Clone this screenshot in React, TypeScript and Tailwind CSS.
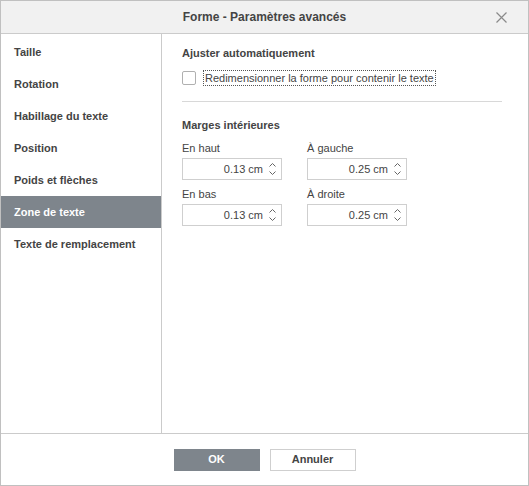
const font = { fontFamily: '"Liberation Sans", Arial, sans-serif' };

const menu = [
  'Taille',
  'Rotation',
  'Habillage du texte',
  'Position',
  'Poids et flèches',
  'Zone de texte',
  'Texte de remplacement',
];

export default function App() {
  return (
    <div style={font} className="w-[529px] h-[486px] bg-white border border-[#c0c0c0] flex flex-col text-[#444] text-[11px]">
      {/* Header */}
      <div className="h-[33px] shrink-0 bg-[#f1f1f1] border-b border-[#cbcbcb] flex items-center justify-center relative">
        <span className="text-[12px] font-bold text-[#444]">Forme - Paramètres avancés</span>
        <svg className="absolute right-[21px] top-[11px]" width="11" height="11" viewBox="0 0 11 11" fill="none" stroke="#8a8a8a" strokeWidth="1.2">
          <path d="M0.5 0.5 L10.5 10.5 M10.5 0.5 L0.5 10.5" />
        </svg>
      </div>

      {/* Body */}
      <div className="flex h-[400px] shrink-0 border-b border-[#cbcbcb]">
        <div className="w-[161px] shrink-0 border-r border-[#cbcbcb] pt-[2px]">
          {menu.map((m) => (
            <div
              key={m}
              className={`h-[32px] flex items-center pl-[13px] font-bold leading-[16px] ${
                m === 'Zone de texte' ? 'bg-[#7e858c] text-white' : 'text-[#444]'
              }`}
            >
              {m}
            </div>
          ))}
        </div>

        <div className="flex-1 pl-[20px] pt-[11px]">
          <div className="font-bold leading-[16px]">Ajuster automatiquement</div>
          <div className="flex items-center mt-[9px] h-[16px]">
            <div className="w-[14px] h-[14px] border border-[#b0b0b0] rounded-[2px] bg-white" />
            <span className="ml-[7px] border border-dotted border-[#555] px-[1px] leading-[14px] h-[16px]">
              Redimensionner la forme pour contenir le texte
            </span>
          </div>
          <div className="w-[320px] h-px bg-[#d8d8d8] mt-[15px]" />

          <div className="font-bold leading-[16px] mt-[15px]">Marges intérieures</div>
          <div className="grid grid-cols-[100px_100px] gap-x-[25px] mt-[7px]">
            <Field label="En haut" value="0.13 cm" />
            <Field label="À gauche" value="0.25 cm" />
            <div className="mt-[6px] col-span-2 grid grid-cols-[100px_100px] gap-x-[25px]">
              <Field label="En bas" value="0.13 cm" />
              <Field label="À droite" value="0.25 cm" />
            </div>
          </div>
        </div>
      </div>

      {/* Footer */}
      <div className="flex-1 flex items-center justify-center gap-[10px]">
        <button className="w-[86px] h-[22px] bg-[#7e858c] text-white font-bold text-[11px]">OK</button>
        <button className="w-[86px] h-[22px] bg-white border border-[#cfcfcf] text-[#444] font-bold text-[11px]">
          Annuler
        </button>
      </div>
    </div>
  );
}

function Field({ label, value }: { label: string; value: string }) {
  return (
    <div>
      <div className="leading-[16px]">{label}</div>
      <div className="mt-[2px] h-[22px] border border-[#cfcfcf] flex items-center justify-end pr-[5px]">
        <span className="leading-[14px]">{value}</span>
        <div className="ml-[6px] flex flex-col gap-[4px] items-center">
          <svg width="7" height="4" viewBox="0 0 7 4" fill="none" stroke="#666" strokeWidth="1">
            <path d="M0.5 3.5 L3.5 0.5 L6.5 3.5" />
          </svg>
          <svg width="7" height="4" viewBox="0 0 7 4" fill="none" stroke="#666" strokeWidth="1">
            <path d="M0.5 0.5 L3.5 3.5 L6.5 0.5" />
          </svg>
        </div>
      </div>
    </div>
  );
}
